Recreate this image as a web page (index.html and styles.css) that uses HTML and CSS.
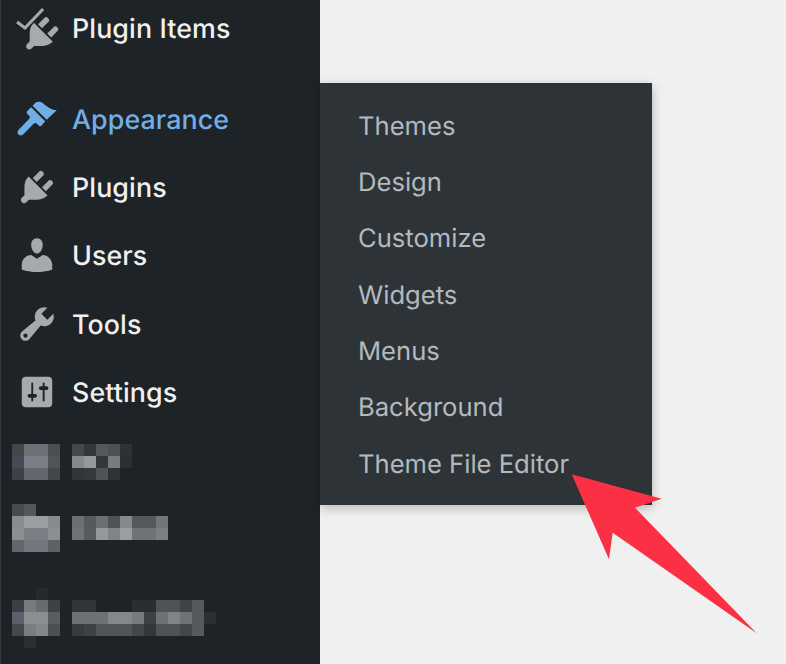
FILE: index.html
```html
<!DOCTYPE html>
<html lang="en">
<head>
<meta charset="utf-8">
<title>Appearance menu</title>
<link rel="stylesheet" href="styles.css">
</head>
<body>
<div class="page">
  <aside class="sidebar">
    <a class="item item-first">
      <svg class="icon icon-items" viewBox="0 0 20 20"><path class="plug" d="M13.11 4.36L9.87 7.6 8 5.73l3.24-3.24c.35-.34 1.05-.2 1.56.32.52.51.66 1.21.31 1.55zm-8 1.77l.91-1.12 9.01 9.01-1.19.84c-.71.71-2.63 1.16-3.82 1.16H6.14L4.9 17.26c-.59.59-1.54.59-2.12 0-.59-.58-.59-1.53 0-2.12l1.24-1.24v-3.88c0-1.13.4-3.19 1.09-3.89zm7.26 3.97l3.24-3.24c.34-.35 1.04-.21 1.55.31.52.51.66 1.21.31 1.55l-3.24 3.25z"/><path class="check-gap" d="M.5 7.1L4.3 10 12.9.95"/><path class="check" d="M.5 7.1L4.3 10 12.9.95"/></svg>
      <span>Plugin Items</span>
    </a>
    <a class="item item-active">
      <svg class="icon" viewBox="0 0 20 20"><path d="M14.6 10.4L7.9 3.7l1.5-1.5c.7-.6 2.3-.5 3.4.3 1.2.8 1.5 1.3 2.9 2.1 1.2.6 2.3 1.1 3.7 1.2zM13.9 11.1L7.2 4.4 5.4 6.2c-.4.4-.4 1 0 1.4l.9.9c.4.4.4 1 0 1.4l-5 5.2c-.7.8-.7 1.7-.1 2.3.6.6 1.6.6 2.3-.1l5-5.1c.4-.4 1-.4 1.4 0l.9.9c.4.4 1 .4 1.4 0z"/></svg>
      <span>Appearance</span>
    </a>
    <a class="item">
      <svg class="icon" viewBox="0 0 20 20"><path d="M13.11 4.36L9.87 7.6 8 5.73l3.24-3.24c.35-.34 1.05-.2 1.56.32.52.51.66 1.21.31 1.55zm-8 1.77l.91-1.12 9.01 9.01-1.19.84c-.71.71-2.63 1.16-3.82 1.16H6.14L4.9 17.26c-.59.59-1.54.59-2.12 0-.59-.58-.59-1.53 0-2.12l1.24-1.24v-3.88c0-1.13.4-3.19 1.09-3.89zm7.26 3.97l3.24-3.24c.34-.35 1.04-.21 1.55.31.52.51.66 1.21.31 1.55l-3.24 3.25z"/></svg>
      <span>Plugins</span>
    </a>
    <a class="item">
      <svg class="icon" viewBox="0 0 20 20"><path d="M10 9.25c-2.27 0-2.73-3.44-2.73-3.44C7 4.02 7.82 2 9.97 2c2.16 0 2.98 2.02 2.71 3.81 0 0-.41 3.44-2.68 3.44zm0 2.57L12.72 10c2.39 0 4.52 2.33 4.52 4.53v2.49s-3.65 1.13-7.24 1.13c-3.65 0-7.24-1.13-7.24-1.13v-2.49c0-2.25 1.94-4.48 4.47-4.48z"/></svg>
      <span>Users</span>
    </a>
    <a class="item">
      <svg class="icon" viewBox="0 0 20 20"><path d="M16.68 9.77c-1.34 1.34-3.3 1.67-4.95.99l-5.41 6.52c-.99.99-2.59.99-3.58 0s-.99-2.59 0-3.57l6.52-5.42c-.68-1.65-.35-3.61.99-4.95 1.28-1.28 3.12-1.62 4.72-1.06l-2.89 2.89 2.82 2.82 2.86-2.87c.53 1.58.18 3.39-1.08 4.65zM3.81 16.21c.4.39 1.04.39 1.43 0 .4-.4.4-1.04 0-1.43-.39-.4-1.03-.4-1.43 0-.39.39-.39 1.03 0 1.43z"/></svg>
      <span>Tools</span>
    </a>
    <a class="item">
      <svg class="icon icon-settings" viewBox="0 0 20 20"><path d="M18 16V4c0-1.1-.9-2-2-2H4c-1.1 0-2 .9-2 2v12c0 1.1.9 2 2 2h12c1.1 0 2-.9 2-2zM8 11h1c.55 0 1 .45 1 1s-.45 1-1 1H8v1.5c0 .28-.22.5-.5.5s-.5-.22-.5-.5V13H6c-.55 0-1-.45-1-1s.45-1 1-1h1V5.5c0-.28.22-.5.5-.5s.5.22.5.5V11zm5-2h-1c-.55 0-1-.45-1-1s.45-1 1-1h1V5.5c0-.28.22-.5.5-.5s.5.22.5.5V7h1c.55 0 1 .45 1 1s-.45 1-1 1h-1v5.5c0 .28-.22.5-.5.5s-.5-.22-.5-.5V9z"/></svg>
      <span>Settings</span>
    </a>
    <svg class="mosaic" viewBox="0 0 240 216" shape-rendering="crispEdges" aria-hidden="true">
      <g>
        <rect x="12" y="0" width="12" height="12" fill="#43474c"/><rect x="24" y="0" width="24" height="12" fill="#6b7177"/><rect x="48" y="0" width="12" height="12" fill="#4b4f53"/>
        <rect x="12" y="12" width="12" height="12" fill="#474b55"/><rect x="24" y="12" width="24" height="12" fill="#797e88"/><rect x="48" y="12" width="12" height="12" fill="#515558"/>
        <rect x="12" y="24" width="12" height="12" fill="#3d4148"/><rect x="24" y="24" width="24" height="12" fill="#62676c"/><rect x="48" y="24" width="12" height="12" fill="#43474b"/>
        <rect x="72" y="0" width="12" height="12" fill="#45494d"/><rect x="84" y="0" width="12" height="12" fill="#33373b"/><rect x="96" y="0" width="12" height="12" fill="#55595d"/><rect x="108" y="0" width="12" height="12" fill="#4d5155"/><rect x="120" y="0" width="12" height="12" fill="#2e3236"/>
        <rect x="72" y="12" width="12" height="12" fill="#85888c"/><rect x="84" y="12" width="12" height="12" fill="#96989b"/><rect x="96" y="12" width="12" height="12" fill="#33373b"/><rect x="108" y="12" width="12" height="12" fill="#787c80"/><rect x="120" y="12" width="12" height="12" fill="#2b2f33"/>
        <rect x="72" y="24" width="12" height="12" fill="#31353a"/><rect x="84" y="24" width="12" height="12" fill="#35393d"/><rect x="96" y="24" width="12" height="12" fill="#4f5357"/><rect x="108" y="24" width="12" height="12" fill="#2f3338"/>
      </g>
      <g>
        <rect x="12" y="60" width="12" height="12" fill="#474b4e"/><rect x="24" y="60" width="12" height="12" fill="#54585c"/>
        <rect x="12" y="72" width="12" height="12" fill="#8a8c90"/><rect x="24" y="72" width="24" height="12" fill="#9b9da0"/><rect x="48" y="72" width="12" height="12" fill="#878a8e"/>
        <rect x="12" y="84" width="12" height="12" fill="#8c8e91"/><rect x="24" y="84" width="24" height="12" fill="#7c7f83"/><rect x="48" y="84" width="12" height="12" fill="#8b8e92"/>
        <rect x="12" y="96" width="12" height="12" fill="#63666d"/><rect x="24" y="96" width="24" height="12" fill="#74777f"/><rect x="48" y="96" width="12" height="12" fill="#5e6267"/>
        <rect x="72" y="72" width="12" height="12" fill="#6c7075"/><rect x="84" y="72" width="12" height="12" fill="#565a5e"/><rect x="96" y="72" width="12" height="12" fill="#6b6f73"/><rect x="108" y="72" width="12" height="12" fill="#4f5358"/><rect x="120" y="72" width="12" height="12" fill="#85888c"/><rect x="132" y="72" width="24" height="12" fill="#55595d"/><rect x="156" y="72" width="12" height="12" fill="#72767a"/>
        <rect x="72" y="84" width="12" height="12" fill="#6f7377"/><rect x="84" y="84" width="12" height="12" fill="#585c60"/><rect x="96" y="84" width="12" height="12" fill="#95979a"/><rect x="108" y="84" width="12" height="12" fill="#808387"/><rect x="120" y="84" width="12" height="12" fill="#9b9da0"/><rect x="132" y="84" width="24" height="12" fill="#6f7377"/><rect x="156" y="84" width="12" height="12" fill="#7c8084"/>
      </g>
      <g>
        <rect x="36" y="144" width="12" height="12" fill="#26292d"/>
        <rect x="12" y="156" width="12" height="12" fill="#3c4044"/><rect x="24" y="156" width="12" height="12" fill="#777a7e"/><rect x="36" y="156" width="12" height="12" fill="#686c70"/><rect x="48" y="156" width="12" height="12" fill="#3e4246"/>
        <rect x="12" y="168" width="12" height="12" fill="#5c606a"/><rect x="24" y="168" width="24" height="12" fill="#8b8d90"/><rect x="48" y="168" width="12" height="12" fill="#5a5e62"/>
        <rect x="12" y="180" width="12" height="12" fill="#45494d"/><rect x="24" y="180" width="12" height="12" fill="#797c80"/><rect x="36" y="180" width="12" height="12" fill="#84878a"/><rect x="48" y="180" width="12" height="12" fill="#4c5054"/>
        <rect x="24" y="192" width="12" height="12" fill="#2b2e32"/>
        <rect x="72" y="156" width="24" height="12" fill="#31353a"/><rect x="132" y="156" width="24" height="12" fill="#2a2e32"/><rect x="156" y="156" width="24" height="12" fill="#4f5357"/><rect x="180" y="156" width="12" height="12" fill="#3f4347"/><rect x="192" y="156" width="12" height="12" fill="#565a5e"/>
        <rect x="72" y="168" width="36" height="12" fill="#6e7276"/><rect x="108" y="168" width="24" height="12" fill="#85888b"/><rect x="132" y="168" width="12" height="12" fill="#777b7f"/><rect x="144" y="168" width="12" height="12" fill="#3d4145"/><rect x="156" y="168" width="12" height="12" fill="#6e7276"/><rect x="168" y="168" width="12" height="12" fill="#808387"/><rect x="180" y="168" width="12" height="12" fill="#6f7377"/><rect x="192" y="168" width="12" height="12" fill="#565a5e"/><rect x="204" y="168" width="12" height="12" fill="#2c3034"/>
        <rect x="72" y="180" width="12" height="12" fill="#373b3f"/><rect x="84" y="180" width="12" height="12" fill="#3e4246"/><rect x="96" y="180" width="36" height="12" fill="#515559"/><rect x="132" y="180" width="12" height="12" fill="#43474b"/><rect x="144" y="180" width="12" height="12" fill="#33373b"/><rect x="156" y="180" width="24" height="12" fill="#4f5357"/><rect x="180" y="180" width="12" height="12" fill="#43474b"/><rect x="192" y="180" width="12" height="12" fill="#565a5e"/>
      </g>
    </svg>
  </aside>
  <main class="main">
    <nav class="flyout">
      <a class="sub">Themes</a>
      <a class="sub">Design</a>
      <a class="sub">Customize</a>
      <a class="sub">Widgets</a>
      <a class="sub">Menus</a>
      <a class="sub">Background</a>
      <a class="sub">Theme File Editor</a>
    </nav>
  </main>
  <svg class="arrow" viewBox="0 0 786 664" aria-hidden="true"><polygon points="571.7,474.3 661.7,498.7 635,507.7 756.7,633.3 612.7,532.7 609,559.3"/></svg>
</div>
</body>
</html>
```
FILE: styles.css
```css
* { box-sizing: border-box; }
html, body { margin: 0; padding: 0; }
body { font-family: Inter, "Liberation Sans", sans-serif; background: #f0f0f1; overflow: hidden; text-rendering: geometricPrecision; }
.page { position: relative; display: flex; width: 786px; height: 664px; overflow: hidden; }
.sidebar { width: 320px; flex: none; background: #1e2327; border-left: 1px solid #33383c; display: flex; flex-direction: column; }
.item { display: flex; align-items: center; gap: 14px; height: 68.2px; padding-left: 15px; color: #f0f0f1; font-size: 26.8px; font-weight: 450; letter-spacing: .1px; }
.item span { padding-top: 2px; }
.item-first { height: 56px; margin-bottom: 29px; }
.icon { width: 42px; height: 42px; flex: none; fill: #a7aaad; overflow: visible; }
.icon-settings { width: 38px; height: 38px; margin: 0 2px; }
.item-active { color: #72aee6; }
.item-active .icon { fill: #72aee6; }
.icon-items .plug { transform: translate(2.5px, 2.5px); }
.check, .check-gap { fill: none; }
.check { stroke: #a7aaad; stroke-width: 1.5; }
.check-gap { stroke: #1e2327; stroke-width: 2.6; }
.mosaic { display: block; width: 240px; height: 216px; margin: 18px 0 0 -1px; flex: none; }
.main { position: relative; flex: 1; background: #f0f0f1; }
.flyout { position: absolute; left: 0; top: 83px; width: 332px; height: 422px; padding: 15px 0 0 38px; background: #2e3338; box-shadow: 0 3px 10px rgba(0,0,0,.25); display: flex; flex-direction: column; }
.sub { display: flex; align-items: center; flex: none; height: 56.35px; color: #b4b9be; font-size: 25.6px; }
.arrow { position: absolute; left: 0; top: 0; width: 786px; height: 664px; fill: #fb3044; pointer-events: none; }
```
